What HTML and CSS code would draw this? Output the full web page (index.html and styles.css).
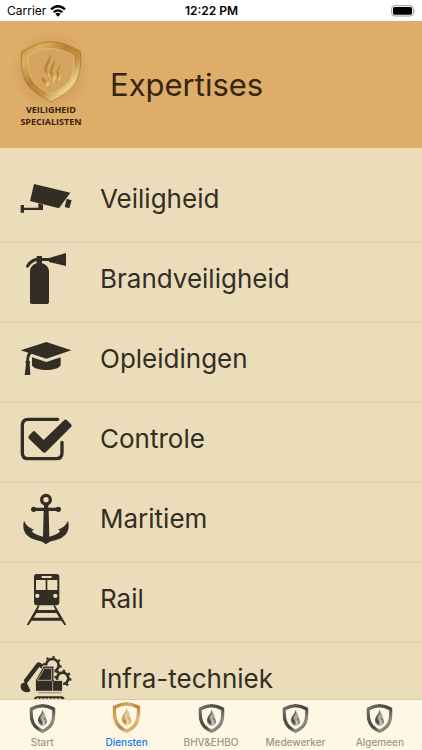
FILE: index.html
```html
<!DOCTYPE html>
<html lang="nl">
<head>
<meta charset="utf-8">
<meta name="viewport" content="width=device-width, initial-scale=1">
<title>Expertises</title>
<link rel="stylesheet" href="styles.css">
</head>
<body>
<svg class="defs" aria-hidden="true">
  <defs>
    <linearGradient id="gold" x1="0" y1="0" x2="1" y2="1">
      <stop offset="0" stop-color="#b98432"/>
      <stop offset=".2" stop-color="#dcb060"/>
      <stop offset=".42" stop-color="#b98231"/>
      <stop offset=".62" stop-color="#c39343"/>
      <stop offset=".78" stop-color="#f0d58b"/>
      <stop offset="1" stop-color="#b17a28"/>
    </linearGradient>
    <linearGradient id="bronze" x1="0" y1="0" x2="1" y2="1">
      <stop offset="0" stop-color="#b98742"/>
      <stop offset=".3" stop-color="#d9a860"/>
      <stop offset=".55" stop-color="#b8843c"/>
      <stop offset=".75" stop-color="#e3bd78"/>
      <stop offset="1" stop-color="#b98742"/>
    </linearGradient>
    <linearGradient id="steel" x1="0" y1="0" x2="1" y2="1">
      <stop offset="0" stop-color="#777772"/>
      <stop offset=".3" stop-color="#51514d"/>
      <stop offset=".55" stop-color="#464642"/>
      <stop offset=".75" stop-color="#92918a"/>
      <stop offset="1" stop-color="#454540"/>
    </linearGradient>
    <radialGradient id="glow">
      <stop offset=".5" stop-color="#a06c2e" stop-opacity=".25"/>
      <stop offset="1" stop-color="#a06c2e" stop-opacity="0"/>
    </radialGradient>
    <symbol id="shield" viewBox="0 0 184 186">
      <path fill-rule="evenodd" d="M92 2C116 2 142 10 162 22C170 26 177 27 181 32C184 62 182 94 168 122C154 148 126 165 92 183C58 165 30 148 16 122C2 94 0 62 3 32C7 27 14 26 22 22C42 10 68 2 92 2ZM92 23C68 23 44 31 24 44C22 70 24 96 36 116C46 134 64 145 92 158C120 145 138 134 148 116C160 96 162 70 160 44C140 31 116 23 92 23Z"/>
      <path d="M90 36C90 54 70 66 70 84C70 98 90 100 90 116C92 102 80 94 80 84C80 70 98 62 90 36Z"/>
      <path d="M102 53C104 68 83 75 84 90C86 106 107 106 98 130C119 111 98 99 96 89C95 78 110 72 102 53Z"/>
      <path d="M117 68C119 79 103 86 106 94C108 104 119 108 105 128C132 112 118 99 114 93C111 84 123 84 117 68Z"/>
      <path d="M65 83C58 100 69 112 78 118C88 125 91 132 88 140C78 132 65 125 64 110C62 101 60 95 65 83Z"/>
    </symbol>
    <symbol id="tab-shield" viewBox="0 0 78 87">
      <path class="tab-ring" d="M39 5Q56 6 73 15Q75 40 67 58Q59 73 39 82Q19 73 11 58Q3 40 5 15Q22 6 39 5Z"/>
      <path d="M39 17C42 27 29 32 28 43C20 54 31 65 38 67C51 64 56 52 48 44C49 33 44 24 39 17Z" opacity=".45"/>
      <path d="M39 17C45 31 32 33 33 43C34 51 43 54 38 67C36 58 25 56 26 45C27 35 38 32 39 17ZM46 31C51 39 41 43 45 49C48 55 48 61 42 65C58 57 52 46 48 42Z"/>
    </symbol>
  </defs>
</svg>
<div class="app">
  <div class="status">
    <span class="carrier">Carrier
      <svg class="wifi" viewBox="0 0 48 36" aria-hidden="true">
        <path d="M3 13Q24-6 45 13" fill="none" stroke="#000" stroke-width="7"/>
        <path d="M11 22Q24 10 37 22" fill="none" stroke="#000" stroke-width="6"/>
        <path d="M16 27Q24 20 32 27L24 35Z"/>
      </svg>
    </span>
    <time class="clock">12:22 PM</time>
    <svg class="battery" viewBox="0 0 75 36" aria-hidden="true">
      <rect x="2" y="2" width="65" height="31" rx="9" fill="none" stroke="#999" stroke-width="3"/>
      <rect x="6" y="6" width="57" height="23" rx="5"/>
      <path d="M70 13Q75 17 70 22Z" fill="#999"/>
    </svg>
  </div>

  <header class="header">
    <div class="brand">
      <svg class="brand-shield" viewBox="-30 -30 244 246" aria-hidden="true">
        <circle cx="92" cy="90" r="122" fill="url(#glow)"/>
        <path d="M92 23C68 23 44 31 24 44C22 70 24 96 36 116C46 134 64 145 92 158C120 145 138 134 148 116C160 96 162 70 160 44C140 31 116 23 92 23Z" fill="#d3a35f"/>
        <use href="#shield" width="184" height="186" fill="url(#gold)"/>
        <path d="M92 3C116 3 142 11 162 23L180 33C183 62 181 94 167 121C153 147 126 164 92 182C58 164 31 147 17 121C3 94 1 62 4 33L22 23C42 11 68 3 92 3Z" fill="none" stroke="#9d6d25" stroke-width="2"/>
        <path d="M92 23C68 23 44 31 24 44C22 70 24 96 36 116C46 134 64 145 92 158C120 145 138 134 148 116C160 96 162 70 160 44C140 31 116 23 92 23Z" fill="none" stroke="#e0bb70" stroke-width="3"/>
      </svg>
      <span class="brand-name">VEILIGHEID<br>SPECIALISTEN</span>
    </div>
    <h1>Expertises</h1>
  </header>

  <main class="content">
    <ul class="list">
      <li><a class="row" href="#veiligheid">
        <svg class="icon" viewBox="60 39 156 156" aria-hidden="true">
          <path d="M102 72L211 98L177 145L90 123Z"/>
          <path d="M200 116L215 121L208 145L194 141Z"/>
          <path d="M62 135H72V143H115V130L129 134V150H72V158H62Z"/>
        </svg>Veiligheid</a></li>
      <li><a class="row" href="#brandveiligheid">
        <svg class="icon" viewBox="60 279 156 156" aria-hidden="true">
          <path d="M110 288H126V294H147L198 279V318L147 306V303H126V310C140 314 147 324 147 334V427Q147 432 142 432H95Q90 432 90 427V334C90 324 97 314 110 310V303C98 306 91 314 86 321Q83 325 79 322Q77 320 79 316C85 304 97 296 110 294Z"/>
        </svg>Brandveiligheid</a></li>
      <li><a class="row" href="#opleidingen">
        <svg class="icon" viewBox="60 39 156 156" aria-hidden="true">
          <path d="M139 66L214 91L139 116L94 101C88 108 87 115 87 121Q93 126 89 132L91 165H74L78 133Q73 127 79 121C79 111 81 104 85 98L62 91Z"/>
          <path d="M96 112L139 126L182 112V136C174 155 104 155 96 136Z"/>
        </svg>Opleidingen</a></li>
      <li><a class="row" href="#controle">
        <svg class="icon" viewBox="60 279 156 156" aria-hidden="true">
          <path d="M173 298H85Q67 298 67 316V398Q67 416 85 416H168Q186 416 186 398V367" fill="none" stroke="currentColor" stroke-width="10" stroke-linecap="round"/>
          <path d="M87 347L98 335Q102 331 106 335L131 360L193 300Q197 297 201 301L213 313Q217 317 213 321L138 396Q133 401 128 396L87 356Q83 351 87 347Z"/>
        </svg>Controle</a></li>
      <li><a class="row" href="#maritiem">
        <svg class="icon" viewBox="60 39 156 156" aria-hidden="true">
          <circle cx="138" cy="59" r="13" fill="none" stroke="currentColor" stroke-width="10"/>
          <circle cx="101" cy="88" r="8"/><circle cx="175" cy="88" r="8"/>
          <path d="M101 83H132V70H145V83H175V93H146L148 170C164 166 176 161 181 153L174 149C187 144 198 136 204 122C210 146 202 163 188 171C176 182 151 180 138 193C125 180 100 182 88 171C74 163 66 146 72 122C78 136 89 144 102 149L95 153C100 161 112 166 129 170L131 93H101Z"/>
        </svg>Maritiem</a></li>
      <li><a class="row" href="#rail">
        <svg class="icon" viewBox="60 279 156 156" aria-hidden="true">
          <path fill-rule="evenodd" d="M110 282H170Q178 282 178 290V367Q178 376 169 376H111Q102 376 102 367V290Q102 282 110 282ZM125 288V294H155V288ZM108 300V330H137V300ZM142 300V330H172V300ZM112 341A6 6 0 1 0 112 354A6 6 0 1 0 112 341ZM166 341A6 6 0 1 0 166 354A6 6 0 1 0 166 341Z"/>
          <path d="M114 376H119L113 390H166L160 376H165L199 435H193L184 422H95L86 435H80ZM110 399L101 413H178L169 399Z" fill-rule="evenodd"/>
        </svg>Rail</a></li>
      <li><a class="row" href="#infra-techniek">
        <svg class="icon" viewBox="60 69 156 156" aria-hidden="true">
          <g fill="none" stroke="currentColor">
            <circle cx="157" cy="106" r="19" stroke-width="8"/>
            <circle cx="157" cy="106" r="25" stroke-width="6" stroke-dasharray="7 12.6"/>
            <circle cx="188" cy="145" r="17" stroke-width="8"/>
            <circle cx="188" cy="145" r="23" stroke-width="7" stroke-dasharray="7 11"/>
          </g>
          <path d="M63 162L74 157L71 151L110 100Q115 94 121 98L132 105L126 117L118 111L81 160L92 183Q77 192 66 181Q60 174 63 162Z"/>
          <path d="M130 108H162V151H188V184H106V151Z" stroke="#ebddba" stroke-width="3"/>
          <path d="M133 115H155V151H112Z" fill="none" stroke="#ebddba" stroke-width="2"/>
          <path d="M158 153V184" stroke="#ebddba" stroke-width="2"/>
          <path d="M114 188H184" stroke="#a89d83" stroke-width="4"/>
          <rect x="102" y="199" width="92" height="24" rx="11"/>
          <path d="M110 206H187" stroke="#ebddba" stroke-width="3" stroke-dasharray="7 4"/>
        </svg>Infra-techniek</a></li>
    </ul>
  </main>

  <nav class="tabs" aria-label="Hoofdmenu">
    <a class="tab" href="#start"><svg class="tab-icon" viewBox="0 0 78 87" aria-hidden="true"><use href="#tab-shield"/></svg>Start</a>
    <a class="tab active" href="#diensten" aria-current="page"><svg class="tab-icon" viewBox="0 0 78 87" aria-hidden="true"><use href="#tab-shield"/></svg>Diensten</a>
    <a class="tab" href="#bhv"><svg class="tab-icon" viewBox="0 0 78 87" aria-hidden="true"><use href="#tab-shield"/></svg>BHV&amp;EHBO</a>
    <a class="tab" href="#medewerker"><svg class="tab-icon" viewBox="0 0 78 87" aria-hidden="true"><use href="#tab-shield"/></svg>Medewerker</a>
    <a class="tab" href="#algemeen"><svg class="tab-icon" viewBox="0 0 78 87" aria-hidden="true"><use href="#tab-shield"/></svg>Algemeen</a>
  </nav>
</div>
</body>
</html>
```
FILE: styles.css
```css
* {
  box-sizing: border-box;
}

body {
  margin: 0;
  font-family: Inter, "Liberation Sans", sans-serif;
  color: #322d25;
  background: #ebddba;
}

a {
  color: inherit;
  text-decoration: none;
}

.defs {
  position: absolute;
  width: 0;
  height: 0;
}

.app {
  display: flex;
  flex-direction: column;
  height: 100vh;
}

.status {
  display: grid;
  grid-template-columns: 1fr auto 1fr;
  align-items: center;
  padding: 3px 6px 2px 7px;
  background: #fff;
  color: #000;
  font-size: 12px;
  line-height: 16px;
}

.carrier {
  display: flex;
  align-items: center;
  gap: 4px;
}

.wifi {
  width: 16px;
  height: 12px;
}

.clock {
  font-weight: 600;
}

.battery {
  justify-self: end;
  width: 25px;
  height: 12px;
}

.header {
  display: flex;
  align-items: center;
  gap: 18px;
  padding: 10px;
  background: #dead6a;
}

.brand {
  display: flex;
  flex-direction: column;
  align-items: center;
  width: 82px;
  padding-bottom: 10px;
}

.brand-shield {
  width: 82px;
  height: 82px;
  margin-bottom: -9px;
}

.brand-name {
  font: 700 9px/12px "Open Sans", sans-serif;
  text-align: center;
  color: #38240f;
}

h1 {
  margin: 0;
  font-size: 31px;
  font-weight: 400;
  line-height: 40px;
  color: #35260f;
}

.content {
  flex: 1;
  min-height: 0;
  overflow: hidden;
}

.list {
  margin: 0;
  padding: 15px 0 0;
  list-style: none;
}

.row {
  display: flex;
  align-items: center;
  gap: 28px;
  padding: 10px 20px 17px;
  border-bottom: 1px solid #dccfaf;
  font-size: 26px;
  line-height: 52px;
}

.icon {
  flex: none;
  width: 52px;
  height: 52px;
  fill: currentColor;
}

.tabs {
  display: flex;
  border-top: 1px solid #d8ccac;
  background: #fff7e3;
}

.tab {
  flex: 1 1 0;
  display: flex;
  flex-direction: column;
  align-items: center;
  gap: 2px;
  padding: 4px 0 1px;
  font-size: 10px;
  font-weight: 500;
  line-height: 14px;
  color: #9e9781;
}

.tab-icon {
  width: 29px;
  height: 29px;
  fill: url(#steel);
  stroke: url(#steel);
  stroke-width: 0;
}

.tab-ring {
  fill: none;
  stroke-width: 10px;
  stroke-linejoin: round;
}

.active {
  color: #1778ee;
}

.active .tab-icon {
  height: 31px;
  margin-top: -2px;
  fill: url(#bronze);
  stroke: url(#bronze);
}
```
